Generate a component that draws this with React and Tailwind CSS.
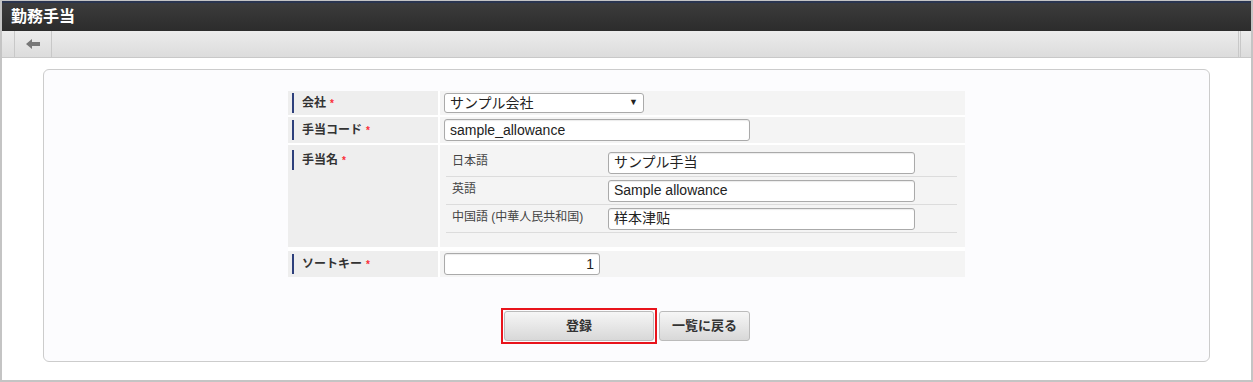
import React from "react";

const font = { fontFamily: '"Liberation Sans", "Noto Sans CJK JP", sans-serif' };

const Req = () => <span className="ml-1 text-[10px] text-red-500 align-top">*</span>;

const Label = ({ children, tall }) => (
  <div className={`w-[150px] shrink-0 bg-[#eeeeee] pl-[4px] ${tall ? "pt-[5px]" : "flex items-center"}`}>
    <div className="flex h-[20px] items-center border-l-[2px] border-[#2d3f7b] pl-[8px] text-[12px] font-bold text-[#333]">
      {children}
      <Req />
    </div>
  </div>
);

const TextInput = ({ value, className = "" }) => (
  <div className={`flex h-[22px] items-center rounded-[3px] border border-[#aaa] bg-white px-[5px] text-[14px] text-[#222] shadow-[inset_0_1px_1px_rgba(0,0,0,0.08)] ${className}`}>
    {value}
  </div>
);

const SubRow = ({ label, value }) => (
  <div className="flex h-[28px] items-center border-b border-[#dcdcdc]">
    <div className="w-[162px] pb-[3px] pl-[6px] text-[12px] text-[#444]">{label}</div>
    <TextInput value={value} className="w-[307px]" />
  </div>
);

export default function App() {
  return (
    <div style={font} className="h-[382px] w-[1253px] overflow-hidden border-x-2 border-b-2 border-t border-[#c4c4c4] bg-white">
      <div className="flex h-[30px] items-center border-t-[2px] border-[#2a3550] bg-gradient-to-b from-[#3c3c3c] to-[#2c2c2c] pl-[9px]">
        <span className="text-[16px] font-bold text-white">勤務手当</span>
      </div>
      <div className="flex h-[27px] border-b border-[#c8c8c8] bg-gradient-to-b from-[#ececec] to-[#dcdcdc] pl-[12px]">
        <div className="flex w-[38px] items-center justify-center border-x border-[#c8c8c8]">
          <svg width="14" height="10" viewBox="0 0 14 10">
            <path d="M0 5 L6 0 L6 3 L14 3 L14 7 L6 7 L6 10 Z" fill="#777" />
          </svg>
        </div>
        <div className="flex-1" />
        <div className="mr-[10px] w-[3px] border-x border-[#c8c8c8]" />
      </div>
      <div className="px-[41px] pt-[11px]">
        <div className="h-[293px] rounded-[6px] border border-[#cccccc] bg-[#fcfcfe] pt-[21px]">
          <div className="mx-auto flex w-[677px] flex-col gap-[2px] bg-white">
            <div className="flex h-[24px] gap-[2px]">
              <Label>会社</Label>
              <div className="flex flex-1 items-center bg-[#f4f4f4] pl-[4px]">
                <div className="flex h-[20px] w-[200px] items-center justify-between rounded-[3px] border border-[#aaa] bg-white px-[5px] text-[14px] text-[#222]">
                  <span>サンプル会社</span>
                  <span className="text-[9px]">▼</span>
                </div>
              </div>
            </div>
            <div className="flex h-[26px] gap-[2px]">
              <Label>手当コード</Label>
              <div className="flex flex-1 items-center bg-[#f4f4f4] pl-[4px]">
                <TextInput value="sample_allowance" className="w-[306px]" />
              </div>
            </div>
            <div className="flex h-[102px] gap-[2px]">
              <Label tall>手当名</Label>
              <div className="flex-1 bg-[#f4f4f4] pl-[6px] pr-[8px] pt-[4px]">
                <SubRow label="日本語" value="サンプル手当" />
                <SubRow label="英語" value="Sample allowance" />
                <SubRow label="中国語 (中華人民共和国)" value="样本津贴" />
              </div>
            </div>
            <div className="mt-[2px] flex h-[26px] gap-[2px]">
              <Label>ソートキー</Label>
              <div className="flex flex-1 items-center bg-[#f4f4f4] pl-[4px]">
                <TextInput value="1" className="w-[156px] justify-end" />
              </div>
            </div>
          </div>
          <div className="mt-[31px] flex items-center justify-center gap-[2px] pr-[2px]">
            <div className="border-2 border-[#e8141c] p-px">
              <button className="h-[30px] w-[150px] rounded-[3px] border border-[#bbb] bg-gradient-to-b from-[#f6f6f6] to-[#d8d8d8] text-[13px] font-bold text-[#333]">
                登録
              </button>
            </div>
            <button className="h-[30px] w-[91px] rounded-[3px] border border-[#bbb] bg-gradient-to-b from-[#f6f6f6] to-[#d8d8d8] text-[13px] font-bold text-[#333]">
              一覧に戻る
            </button>
          </div>
        </div>
      </div>
    </div>
  );
}
